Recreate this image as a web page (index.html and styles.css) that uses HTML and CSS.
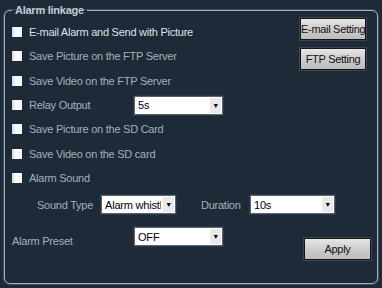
FILE: index.html
```html
<!DOCTYPE html>
<html lang="en">
<head>
    <meta charset="UTF-8">
    <meta name="viewport" content="width=device-width, initial-scale=1.0">
    <title>Alarm linkage</title>
    <link rel="stylesheet" href="styles.css">
</head>
<body>

<fieldset class="linkage">
    <legend>Alarm linkage</legend>

    <!-- checkbox list with the setting buttons beside it -->
    <div class="top">
        <div class="list">
            <label class="row"><input type="checkbox"><span class="bright">E-mail Alarm and Send with Picture</span></label>
            <label class="row"><input type="checkbox"><span>Save Picture on the FTP Server</span></label>
            <label class="row"><input type="checkbox"><span>Save Video on the FTP Server</span></label>
        </div>
        <div class="side">
            <button class="btn">E-mail Setting</button>
            <button class="btn">FTP Setting</button>
        </div>
    </div>

    <div class="row">
        <input type="checkbox" id="relay">
        <label for="relay" class="relay-label">Relay Output</label>
        <div class="select relay">
            <select>
                <option>5s</option>
                <option>10s</option>
                <option>30s</option>
            </select>
        </div>
    </div>
    <label class="row"><input type="checkbox"><span>Save Picture on the SD Card</span></label>
    <label class="row"><input type="checkbox"><span>Save Video on the SD card</span></label>
    <label class="row"><input type="checkbox"><span>Alarm Sound</span></label>

    <div class="sound">
        <span class="sound-label">Sound Type</span>
        <div class="select sound-type">
            <select>
                <option>Alarm whistle</option>
                <option>Doorbell</option>
            </select>
        </div>
        <span class="duration-label">Duration</span>
        <div class="select duration">
            <select>
                <option>10s</option>
                <option>20s</option>
                <option>30s</option>
            </select>
        </div>
    </div>

    <div class="preset">
        <span class="preset-label">Alarm Preset</span>
        <div class="select relay">
            <select>
                <option>OFF</option>
                <option>1</option>
                <option>2</option>
            </select>
        </div>
        <button class="btn apply">Apply</button>
    </div>
</fieldset>

</body>
</html>
```

FILE: styles.css
```css
* {
    box-sizing: border-box;
}

body {
    margin: 0;
    height: 288px;
    background: #1e2a38;
    font-family: 'Liberation Sans', Arial, sans-serif;
    font-size: 11px;
    letter-spacing: -0.25px;
    color: #a7afb8;
    overflow: hidden;
}

.linkage {
    margin: 3px 4px 0 4px;
    padding: 3px 7px 23px 7px;
    border: 1px solid #9fb1c3;
    border-radius: 6px;
    box-shadow: 0 0 0 1px #3b4d61;
}

.linkage legend {
    padding: 0 3px;
    font-size: 11px;
    line-height: 14px;
    font-weight: bold;
    color: #c3cad2;
}

.top {
    display: flex;
    justify-content: space-between;
}

.side {
    display: flex;
    flex-direction: column;
    gap: 8px;
    margin: -2px 4px 0 0;
}

.row {
    display: flex;
    align-items: center;
    height: 24.3px;
}

.row input[type=checkbox] {
    appearance: none;
    margin: 0 7px 0 0;
    width: 10px;
    height: 10px;
    border: none;
    background: linear-gradient(90deg, #d6d6d6, #ffffff 40%, #f2f2f2);
}

.bright {
    color: #dde2e7;
}

.relay-label {
    width: 105px;
}

.btn {
    height: 22px;
    padding: 0;
    white-space: nowrap;
    font-family: 'Liberation Sans', Arial, sans-serif;
    font-size: 11px;
    letter-spacing: -0.3px;
    color: #111;
    background: linear-gradient(#e6e6e6, #c9c9c9 60%, #bdbdbd);
    border: 1px solid #151515;
    border-radius: 0;
    box-shadow: 0 0 0 1px #3c4652;
}

.side .btn {
    width: 66px;
}

.select {
    position: relative;
    height: 19px;
    background: #fff;
    border: 1px solid #59636d;
    box-shadow: 0 0 0 1px #2b3745;
}

.select select {
    appearance: none;
    width: 100%;
    height: 100%;
    margin: 0;
    padding: 0 14px 0 3px;
    border: none;
    background: transparent;
    font-family: 'Liberation Sans', Arial, sans-serif;
    font-size: 11px;
    letter-spacing: -0.2px;
    color: #000;
    outline: none;
}

/* arrow box drawn over the right end of the select */
.select::after {
    content: "\25BC";
    position: absolute;
    top: 1px;
    right: 1px;
    width: 11px;
    height: 15px;
    background: #e9e9e9;
    font-size: 7px;
    line-height: 15px;
    text-align: center;
    color: #000;
    pointer-events: none;
}

.relay {
    width: 89px;
}

.sound {
    display: flex;
    align-items: center;
    margin-top: 5px;
    padding-left: 25px;
}

.sound-label {
    width: 64px;
}

.sound-type {
    width: 75px;
}

.duration-label {
    width: 49px;
    margin-left: 25px;
}

.duration {
    width: 85px;
}

.preset {
    display: flex;
    align-items: flex-start;
    margin-top: 13px;
}

.preset-label {
    width: 122px;
    margin-top: 7px;
    line-height: 14px;
}

.apply {
    width: 67px;
    margin: 11px -1px 0 auto;
}
```
